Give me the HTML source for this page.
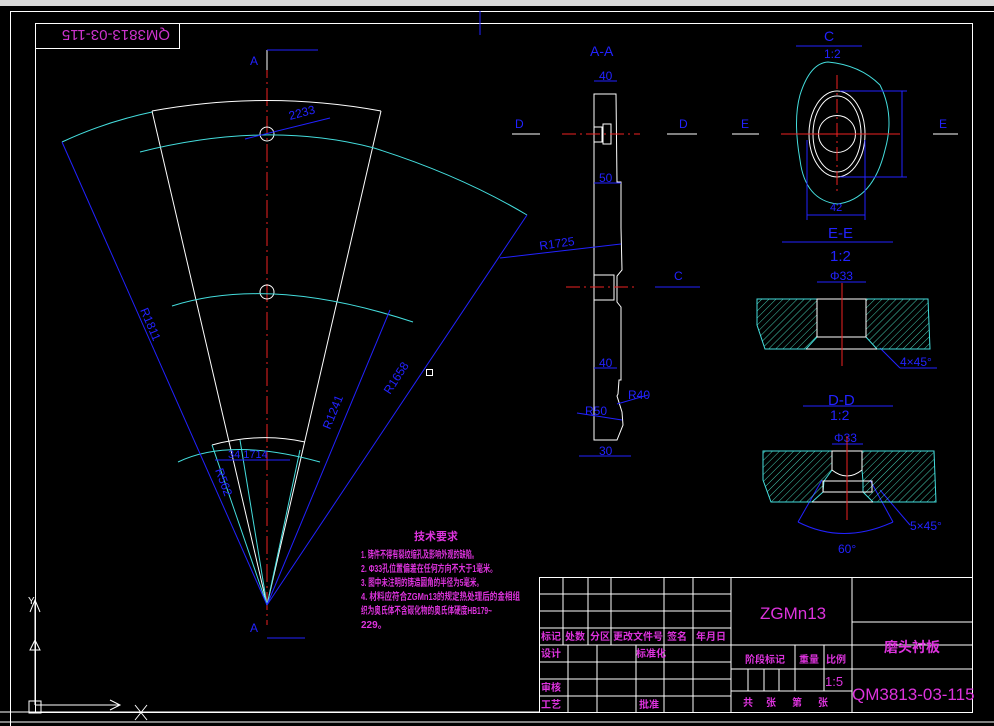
<!DOCTYPE html>
<html><head><meta charset="utf-8"><style>
html,body{margin:0;padding:0;background:#000;width:994px;height:726px;overflow:hidden}
svg{display:block}
text{font-family:"Liberation Sans","Noto Sans CJK SC",sans-serif}
</style></head><body>
<svg width="994" height="726" viewBox="0 0 994 726" xmlns="http://www.w3.org/2000/svg">
<defs>
<pattern id="h" width="5" height="5" patternUnits="userSpaceOnUse" patternTransform="rotate(45)">
<line x1="0" y1="0" x2="0" y2="5" stroke="#5fd" stroke-width="0.8"/>
</pattern>
</defs>
<rect width="994" height="726" fill="#000"/>
<rect x="0" y="0" width="994" height="6" fill="#d8d8d8"/>
<g fill="none" stroke="#fff" stroke-width="1">
<rect x="10.5" y="11.5" width="990" height="720"/>
<rect x="35.5" y="23.5" width="937" height="689"/>
<rect x="35.5" y="23.5" width="144" height="25"/>
</g>
<line x1="480" y1="11" x2="480" y2="35" stroke="#22f"/>
<text transform="translate(170 30) rotate(180)" fill="#c3c" font-size="15" x="0" y="0">QM3813-03-115</text>

<line x1="267" y1="60" x2="267" y2="625" stroke="#e22" stroke-dasharray="18,4,2,4"/>
<g fill="none" stroke="#fff" stroke-width="1">
<path d="M152 111 Q267 90 381 111"/>
<line x1="152" y1="111" x2="267" y2="605"/>
<line x1="381" y1="111" x2="267" y2="605"/>
<circle cx="267" cy="134" r="7"/>
<circle cx="267" cy="292" r="7"/>
<path d="M212 445 Q260 432 305 442"/>
<line x1="267" y1="50" x2="267" y2="70"/>
</g>
<g fill="none" stroke="#4dd" stroke-width="1">
<path d="M62 142 Q105 122 152 112"/>
<path d="M140 152 Q267 120 374 148 Q460 175 527 215"/>
<path d="M172 306 Q270 275 413 322"/>
<path d="M178 462 Q230 437 320 462"/>
<line x1="212" y1="445" x2="267" y2="605"/>
<line x1="300" y1="450" x2="267" y2="605"/>
<line x1="240" y1="440" x2="267" y2="605"/>
</g>
<g fill="none" stroke="#22f" stroke-width="1">
<line x1="62" y1="142" x2="267" y2="605"/>
<line x1="527" y1="215" x2="267" y2="605"/>
<line x1="390" y1="310" x2="267" y2="605"/>
<line x1="267" y1="50" x2="318" y2="50"/>
<line x1="267" y1="638" x2="305" y2="638"/>
<line x1="245" y1="139" x2="330" y2="118"/>
<line x1="215" y1="460" x2="290" y2="460"/>
</g>
<g fill="#22f" font-size="12">
<text x="250" y="65">A</text>
<text x="250" y="632">A</text>
<text x="290" y="120" transform="rotate(-15 290 120)">2233</text>
<text x="140" y="310" transform="rotate(67 140 310)">R1811</text>
<text x="390" y="395" transform="rotate(-57 390 395)">R1658</text>
<text x="330" y="430" transform="rotate(-68 330 430)">R1241</text>
<text x="215" y="470" transform="rotate(70 215 470)">R562</text>
<text x="228" y="458" font-size="11">34 1714</text>
</g>
<rect x="426.5" y="369.5" width="6" height="6" fill="none" stroke="#fff"/>

<g fill="none" stroke="#fff" stroke-width="1">
<path d="M594 94 L616 94 L617 182 L621 182 L621 228 L622 270 L617 276 L617 302 L621 307 L621 380 L619 380 L618 394 L617 396 L622 412 L623 425 L617 440 L594 440 Z"/>
<path d="M594 127 L602 127 L602 142 L594 142"/>
<path d="M603 124 L611 124 L611 144 L603 144 Z"/>
<path d="M594 275 L614 275 L614 300 L594 300"/>
</g>
<line x1="562" y1="134" x2="640" y2="134" stroke="#e22" stroke-dasharray="14,4,2,4"/>
<line x1="566" y1="287" x2="637" y2="287" stroke="#e22" stroke-dasharray="14,4,2,4"/>
<g stroke="#fff"><line x1="667" y1="134" x2="697" y2="134"/><line x1="732" y1="134" x2="759" y2="134"/><line x1="933" y1="134" x2="958" y2="134"/><line x1="512" y1="134" x2="540" y2="134"/></g>
<g stroke="#22f" fill="none">
<line x1="655" y1="287" x2="700" y2="287"/>
<line x1="594" y1="81" x2="617" y2="81"/>
<line x1="594" y1="183" x2="621" y2="183"/>
<line x1="594" y1="368" x2="617" y2="368"/>
<line x1="579" y1="456" x2="631" y2="456"/>
<line x1="500" y1="258" x2="621" y2="244"/>
<line x1="577" y1="413" x2="622" y2="420"/>
<line x1="617" y1="404" x2="648" y2="395"/>
</g>
<g fill="#22f" font-size="12">
<text x="590" y="56" font-size="14">A-A</text>
<text x="599" y="80">40</text><text x="599" y="182">50</text><text x="599" y="367">40</text><text x="599" y="455">30</text>
<text x="540" y="250" transform="rotate(-8 540 250)">R1725</text>
<text x="628" y="399">R40</text><text x="585" y="415">R50</text>
<text x="674" y="280">C</text><text x="679" y="128">D</text><text x="515" y="128">D</text>
<text x="741" y="128">E</text><text x="939" y="128">E</text>
<text x="824" y="41" font-size="14">C</text><text x="824" y="58">1:2</text>
</g>
<line x1="796" y1="46" x2="862" y2="46" stroke="#22f"/>
<path d="M828 62 Q860 65 880 85 Q895 115 885 150 Q873 200 837 204 Q805 200 800 160 Q793 120 800 95 Q810 63 828 62 Z" fill="none" stroke="#4dd"/>
<g fill="none" stroke="#fff">
<ellipse cx="837" cy="134" rx="28" ry="43"/>
<ellipse cx="837" cy="134" rx="24" ry="38"/>
<circle cx="837" cy="134" r="18.5"/>
</g>
<line x1="781" y1="134" x2="900" y2="134" stroke="#e22"/>
<line x1="837" y1="75" x2="837" y2="195" stroke="#e22" stroke-dasharray="14,4,2,4"/>
<g stroke="#22f" fill="none">
<line x1="840" y1="91" x2="907" y2="91"/><line x1="840" y1="177" x2="907" y2="177"/>
<line x1="902" y1="91" x2="902" y2="177"/>
<line x1="807" y1="140" x2="807" y2="220"/><line x1="865" y1="140" x2="865" y2="220"/>
<line x1="807" y1="215" x2="865" y2="215"/>
<line x1="782" y1="242" x2="893" y2="242"/>
<line x1="817" y1="282" x2="866" y2="282"/>
<line x1="803" y1="406" x2="893" y2="406"/>
<line x1="832" y1="444" x2="863" y2="444"/>
<line x1="880" y1="348" x2="900" y2="368"/><line x1="900" y1="368" x2="937" y2="368"/>
<path d="M798 522 Q843 545 893 522"/>
<line x1="798" y1="522" x2="822" y2="480"/><line x1="893" y1="522" x2="870" y2="480"/>
<line x1="880" y1="490" x2="910" y2="525"/>
</g>
<g fill="#22f" font-size="13">
<text x="830" y="211" font-size="11">42</text>
<text x="828" y="238" font-size="15">E-E</text>
<text x="830" y="261" font-size="15">1:2</text>
<text x="830" y="280" font-size="12">Φ33</text>
<text x="900" y="366" font-size="12">4×45°</text>
<text x="828" y="405" font-size="15">D-D</text>
<text x="830" y="420" font-size="14">1:2</text>
<text x="834" y="442" font-size="12">Φ33</text>
<text x="910" y="530" font-size="12">5×45°</text>
<text x="838" y="553" font-size="12">60°</text>
</g>
<path d="M757 299 L817 299 L817 337 L806 349 L765 349 L757 325 Z" fill="url(#h)" stroke="#4dd"/>
<path d="M866 299 L928 299 L930 349 L877 349 L866 337 Z" fill="url(#h)" stroke="#4dd"/>
<g stroke="#fff" fill="none"><path d="M817 299 L866 299 L866 337 L817 337 Z M806 349 L877 349"/></g>
<line x1="842" y1="283" x2="842" y2="366" stroke="#e22"/>
<path d="M763 451 L832 451 L832 470 L824 481 L823 492 L812 502 L771 502 L763 480 Z" fill="url(#h)" stroke="#4dd"/>
<path d="M862 451 L934 451 L936 502 L873 502 L863 492 L863 481 L862 470 Z" fill="url(#h)" stroke="#4dd"/>
<g stroke="#fff" fill="none"><path d="M832 451 L862 451 L862 470 Q847 482 832 470 Z M823 481 L872 481 L872 492 L823 492 Z M812 502 L873 502"/></g>
<line x1="847" y1="436" x2="847" y2="520" stroke="#e22"/>

<g fill="#d3d" font-size="10" font-weight="bold">
<text x="414" y="540" font-size="11">技术要求</text>
<text x="361" y="558" textLength="117" lengthAdjust="spacingAndGlyphs">1. 铸件不得有裂纹缩孔及影响外观的缺陷。</text>
<text x="361" y="572" textLength="136" lengthAdjust="spacingAndGlyphs">2. Φ33孔位置偏差在任何方向不大于1毫米。</text>
<text x="361" y="586" textLength="122" lengthAdjust="spacingAndGlyphs">3. 图中未注明的铸造圆角的半径为5毫米。</text>
<text x="361" y="600" textLength="159" lengthAdjust="spacingAndGlyphs">4. 材料应符合ZGMn13的规定热处理后的金相组</text>
<text x="361" y="614" textLength="131" lengthAdjust="spacingAndGlyphs">织为奥氏体不含碳化物的奥氏体硬度HB179~</text>
<text x="361" y="628">229。</text>
</g>

<g stroke="#fff" fill="none" stroke-width="1">
<rect x="539.5" y="577.5" width="433" height="135"/>
<path d="M539 594H731M539 611H731M539 628H731M539 645H972M539 662H731M539 679H731M539 696H731"/>
<path d="M852 622H972M852 669H972M731 669H852M731 691H852"/>
<path d="M563 577V645M588 577V645M611 577V645M664 577V645M693 577V712M731 577V712M852 577V712"/>
<path d="M568 645V712M597 645V712M636 645V712M664 645V712"/>
<path d="M795 645V691M824 645V691M748 669V691M764 669V691M779 669V691"/>
<path d="M0 712H539M0 722H994"/>
</g>
<g fill="#d3d" font-size="10" font-weight="bold">
<text x="541" y="640">标记</text><text x="565" y="640">处数</text><text x="590" y="640">分区</text><text x="613" y="640">更改文件号</text><text x="667" y="640">签名</text><text x="696" y="640">年月日</text>
<text x="541" y="657">设计</text><text x="636" y="657">标准化</text>
<text x="541" y="691">审核</text><text x="541" y="708">工艺</text><text x="639" y="708">批准</text>
<text x="745" y="663">阶段标记</text><text x="799" y="663">重量</text><text x="826" y="663">比例</text>
<text x="743" y="706">共</text><text x="766" y="706">张</text><text x="792" y="706">第</text><text x="818" y="706">张</text>
</g>
<g fill="#d3d">
<text x="825" y="686" font-size="13">1:5</text>
<text x="760" y="619" font-size="17">ZGMn13</text>
<text x="884" y="652" font-size="14" font-weight="bold">磨头衬板</text>
<text x="852" y="700" font-size="17">QM3813-03-115</text>
</g>

<g stroke="#fff" fill="none">
<path d="M35 705V600M30 612L35 600L40 612M35 705H120M110 700L120 705L110 710"/>
<rect x="29" y="701" width="12" height="12"/>
<path d="M135 705L147 720M147 705L135 720M35 640L30 650H40Z"/>
</g>
<text x="28" y="604" fill="#fff" font-size="10">Y</text>
</svg>
</body></html>
